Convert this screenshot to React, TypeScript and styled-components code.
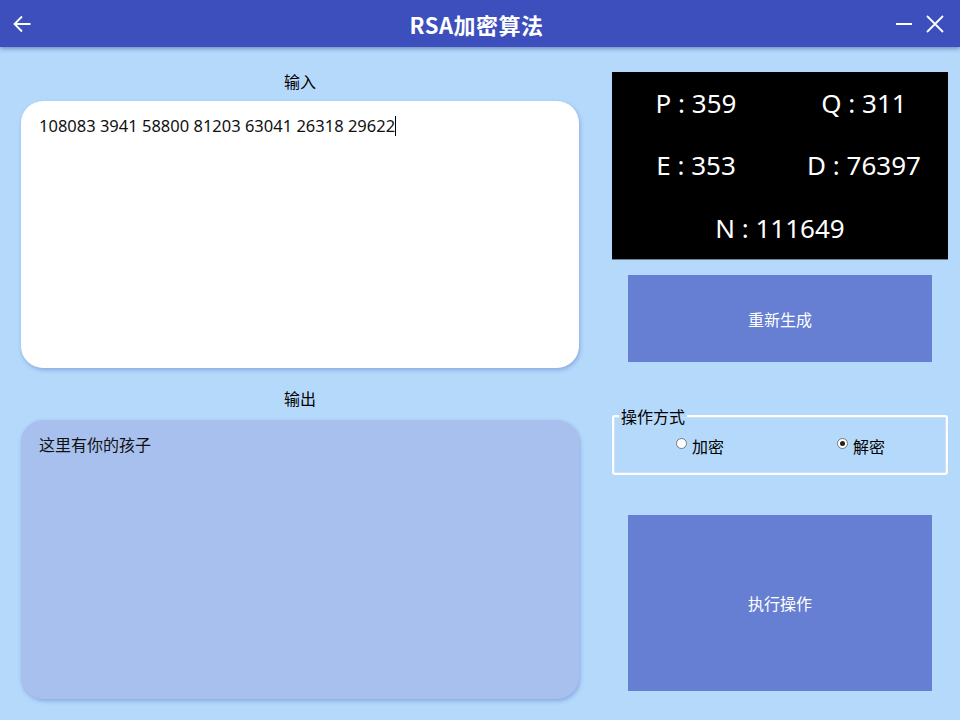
import React, { useState } from "react";
import styled, { createGlobalStyle } from "styled-components";

const Global = createGlobalStyle`
  html, body { margin: 0; padding: 0; }
  body {
    width: 960px; height: 720px; overflow: hidden;
    background: #b5d9fb;
    font-family: "Noto Sans", "Noto Sans CJK SC", sans-serif;
  }
`;

const Page = styled.div`
  width: 960px; height: 720px;
  display: flex; flex-direction: column;
  background: #b5d9fb;
`;

const Header = styled.div`
  height: 47px; flex: none;
  background: #3c4fbd;
  box-shadow: 0 2px 4px rgba(40, 60, 120, 0.45);
  display: flex; align-items: center;
  padding: 0 15px 0 12px;
  position: relative; z-index: 1;
`;

const IconBtn = styled.button<{ $w?: number }>`
  background: none; border: none; padding: 0; margin: 0;
  width: ${(p) => p.$w ?? 20}px; height: 20px;
  display: flex; align-items: center; justify-content: center;
  color: #fff; cursor: pointer;
`;

const Title = styled.div`
  flex: 1; text-align: center;
  color: #fff; font-size: 22px; font-weight: 700;
  font-family: "Noto Sans CJK SC", sans-serif;
  letter-spacing: 0.5px;
  padding-left: 26px;
`;

const RightIcons = styled.div`
  display: flex; align-items: center; gap: 12px;
`;

const Body = styled.div`
  flex: 1;
  display: grid;
  grid-template-columns: 558px 336px;
  column-gap: 33px;
  padding: 0 12px 0 21px;
`;

const LeftCol = styled.div`
  display: flex; flex-direction: column;
`;

const Label = styled.div<{ $top: number; $bottom: number }>`
  height: 20px; line-height: 20px;
  text-align: center; font-size: 16px; color: #000;
  font-family: "Noto Sans CJK SC", sans-serif;
  margin-top: ${(p) => p.$top}px;
  margin-bottom: ${(p) => p.$bottom}px;
`;

const TextBox = styled.div<{ $bg: string; $h: number; $size: number }>`
  height: ${(p) => p.$h}px;
  background: ${(p) => p.$bg};
  border-radius: 22px;
  box-shadow: 1px 2px 4px rgba(80, 110, 190, 0.45);
  padding: 14px 18px;
  box-sizing: border-box;
  font-size: ${(p) => p.$size}px; color: #111;
  font-family: "Noto Sans", "Noto Sans CJK SC", sans-serif;
  line-height: 22px;
`;

const Caret = styled.span`
  display: inline-block; width: 1px; height: 20px;
  background: #000; vertical-align: -4px;
`;

const RightCol = styled.div`
  display: flex; flex-direction: column;
  padding-top: 25px;
`;

const KeyPanel = styled.div`
  height: 187px; background: #000;
  box-shadow: 0 1px 0 #6d7d94;
  display: grid;
  grid-template-columns: 1fr 1fr;
  grid-template-rows: repeat(3, 1fr);
  align-items: center;
  color: #fff; font-size: 26px;
  font-family: "Noto Sans", sans-serif;
`;

const KeyItem = styled.div<{ $span?: boolean }>`
  text-align: center;
  grid-column: ${(p) => (p.$span ? "1 / 3" : "auto")};
`;

const ActionButton = styled.button<{ $h: number; $top: number }>`
  height: ${(p) => p.$h}px;
  margin: ${(p) => p.$top}px 16px 0;
  background: #667fd3; border: none;
  color: #fff; font-size: 16px;
  font-family: "Noto Sans CJK SC", sans-serif;
  cursor: pointer;
`;

const Group = styled.fieldset`
  margin: 45px 0 0; height: 68px;
  box-sizing: border-box;
  border: 2px solid #fff;
  border-radius: 3px;
  box-shadow: inset 0 0 0 1px #cfe1f4;
  padding: 0;
  display: block;
`;

const Legend = styled.legend`
  font-size: 16px; padding: 0 2px; margin-left: 5px;
  font-family: "Noto Sans CJK SC", sans-serif;
  line-height: 18px;
`;

const RadioRow = styled.div`
  display: grid; grid-template-columns: 1fr 1fr;
  width: 100%;
  margin-top: 11px;
`;

const RadioLabel = styled.label<{ $pl: number }>`
  display: flex; align-items: center; gap: 5px;
  font-size: 16px; color: #000;
  font-family: "Noto Sans CJK SC", sans-serif;
  line-height: 20px;
  padding-left: ${(p) => p.$pl}px;
  cursor: pointer;
`;

const RadioDot = styled.span<{ $on: boolean }>`
  width: 11px; height: 11px; border-radius: 50%;
  border: 1px solid #777; background: #fff;
  box-sizing: border-box;
  display: flex; align-items: center; justify-content: center;
  margin-top: -5px;
  &::after {
    content: "";
    width: 5px; height: 5px; border-radius: 50%;
    background: ${(p) => (p.$on ? "#222" : "transparent")};
  }
`;

export default function App() {
  const [mode, setMode] = useState<"enc" | "dec">("dec");
  return (
    <Page>
      <Global />
      <Header>
        <IconBtn aria-label="back">
          <svg width="20" height="20" viewBox="0 0 20 20" fill="none" stroke="#fff" strokeWidth="1.8">
            <path d="M18.5 10H2.5M10 2.5L2.5 10l7.5 7.5" />
          </svg>
        </IconBtn>
        <Title>RSA加密算法</Title>
        <RightIcons>
          <IconBtn aria-label="minimize" $w={18}>
            <svg width="18" height="20" viewBox="0 0 18 20" fill="none" stroke="#fff" strokeWidth="2">
              <path d="M1 10H17" />
            </svg>
          </IconBtn>
          <IconBtn aria-label="close">
            <svg width="20" height="20" viewBox="0 0 20 20" fill="none" stroke="#fff" strokeWidth="1.8">
              <path d="M2 2L18 18M18 2L2 18" />
            </svg>
          </IconBtn>
        </RightIcons>
      </Header>
      <Body>
        <LeftCol>
          <Label $top={24} $bottom={10}>输入</Label>
          <TextBox $bg="#ffffff" $h={267} $size={16.5}>
            108083 3941 58800 81203 63041 26318 29622
            <Caret />
          </TextBox>
          <Label $top={20} $bottom={12}>输出</Label>
          <TextBox $bg="#a8c0ee" $h={279} $size={16}>这里有你的孩子</TextBox>
        </LeftCol>
        <RightCol>
          <KeyPanel>
            <KeyItem>P : 359</KeyItem>
            <KeyItem>Q : 311</KeyItem>
            <KeyItem>E : 353</KeyItem>
            <KeyItem>D : 76397</KeyItem>
            <KeyItem $span>N : 111649</KeyItem>
          </KeyPanel>
          <ActionButton $h={87} $top={16}>重新生成</ActionButton>
          <Group>
            <Legend>操作方式</Legend>
            <RadioRow>
              <RadioLabel $pl={62} onClick={() => setMode("enc")}>
                <RadioDot $on={mode === "enc"} />
                加密
              </RadioLabel>
              <RadioLabel $pl={57} onClick={() => setMode("dec")}>
                <RadioDot $on={mode === "dec"} />
                解密
              </RadioLabel>
            </RadioRow>
          </Group>
          <ActionButton $h={176} $top={40}>执行操作</ActionButton>
        </RightCol>
      </Body>
    </Page>
  );
}
